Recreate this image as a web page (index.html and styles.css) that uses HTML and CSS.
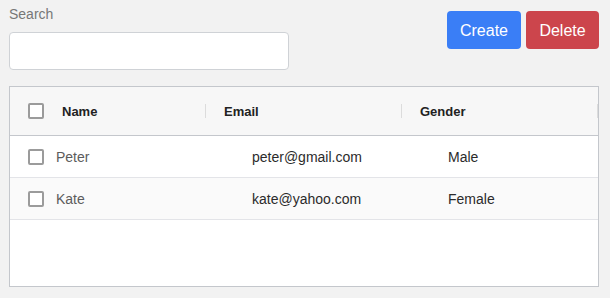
FILE: index.html
```html
<!DOCTYPE html>
<html lang="en">

<head>
    <meta charset="UTF-8">
    <meta name="viewport" content="width=device-width, initial-scale=1.0">
    <title>Users</title>
    <link rel="stylesheet" href="styles.css">
</head>

<body>
    <div class="page">
        <div class="toolbar">
            <div class="search">
                <label for="search">Search</label>
                <input type="text" id="search" name="search">
            </div>
            <div class="actions">
                <button class="btn btn-create">Create</button>
                <button class="btn btn-delete">Delete</button>
            </div>
        </div>

        <div class="grid">
            <div class="grid-head">
                <div class="cell cell-check"><span class="box"></span></div>
                <div class="cell head-cell">Name</div>
                <div class="sep"></div>
                <div class="cell head-cell">Email</div>
                <div class="sep"></div>
                <div class="cell head-cell">Gender</div>
                <div class="sep"></div>
            </div>

            <div class="grid-row">
                <div class="cell cell-check"><span class="box"></span></div>
                <div class="cell cell-name">Peter</div>
                <div class="gap"></div>
                <div class="cell cell-text">peter@gmail.com</div>
                <div class="gap"></div>
                <div class="cell cell-text">Male</div>
                <div class="gap"></div>
            </div>

            <div class="grid-row alt">
                <div class="cell cell-check"><span class="box"></span></div>
                <div class="cell cell-name">Kate</div>
                <div class="gap"></div>
                <div class="cell cell-text">kate@yahoo.com</div>
                <div class="gap"></div>
                <div class="cell cell-text">Female</div>
                <div class="gap"></div>
            </div>
        </div>
    </div>
</body>

</html>
```

FILE: styles.css
```css
/* Base page */
body {
    margin: 0;
    background: #f2f2f2;
    font-family: 'Liberation Sans', Arial, sans-serif;
}

.page {
    padding: 0 11px 0 9px;
}

/* Search + buttons */
.toolbar {
    display: flex;
    justify-content: space-between;
    align-items: flex-start;
}

.search {
    padding-top: 6px;
}

.search label {
    display: block;
    font-size: 14px;
    line-height: 17px;
    color: #777777;
    margin-bottom: 9px;
}

.search input {
    display: block;
    box-sizing: border-box;
    width: 280px;
    height: 38px;
    border: 1px solid #cfd2d6;
    border-radius: 4px;
    background: #ffffff;
}

.actions {
    display: flex;
    gap: 5px;
    padding-top: 11px;
}

.btn {
    height: 38px;
    padding: 1px 12px 0;
    border: none;
    border-radius: 4px;
    color: #ffffff;
    font-family: 'Liberation Sans', Arial, sans-serif;
    font-size: 16px;
}

.btn-create {
    background: #3a7ef6;
    width: 74px;
}

.btn-delete {
    background: #cc454c;
    width: 73px;
}

/* Data grid */
.grid {
    margin-top: 16px;
    height: 201px;
    box-sizing: border-box;
    border: 1px solid #c4c7cc;
    background: #ffffff;
}

.grid-head,
.grid-row {
    display: grid;
    grid-template-columns: 34px 161px 1px 195px 1px 195px 1px;
    align-items: center;
    box-sizing: border-box;
}

.grid-head {
    height: 49px;
    background: #f7f7f7;
    border-bottom: 1px solid #c4c7cc;
}

.grid-row {
    height: 42px;
    border-bottom: 1px solid #e3e4e8;
    background: #ffffff;
}

.grid-row.alt {
    background: #fafafa;
}

.cell {
    white-space: nowrap;
}

.cell-check {
    padding-left: 18px;
    display: flex;
}

.box {
    display: block;
    width: 16px;
    height: 16px;
    box-sizing: border-box;
    border: 2px solid #9b9b9b;
    border-radius: 2px;
    background: #ffffff;
}

.head-cell {
    padding-left: 18px;
    font-size: 13px;
    font-weight: bold;
    color: #222222;
}

.sep {
    height: 14px;
    background: #dcdcdc;
}

.cell-name {
    padding-left: 12px;
    font-size: 14px;
    color: #5c5c5c;
}

.cell-text {
    padding-left: 46px;
    font-size: 14px;
    color: #2b2b2b;
}
```
